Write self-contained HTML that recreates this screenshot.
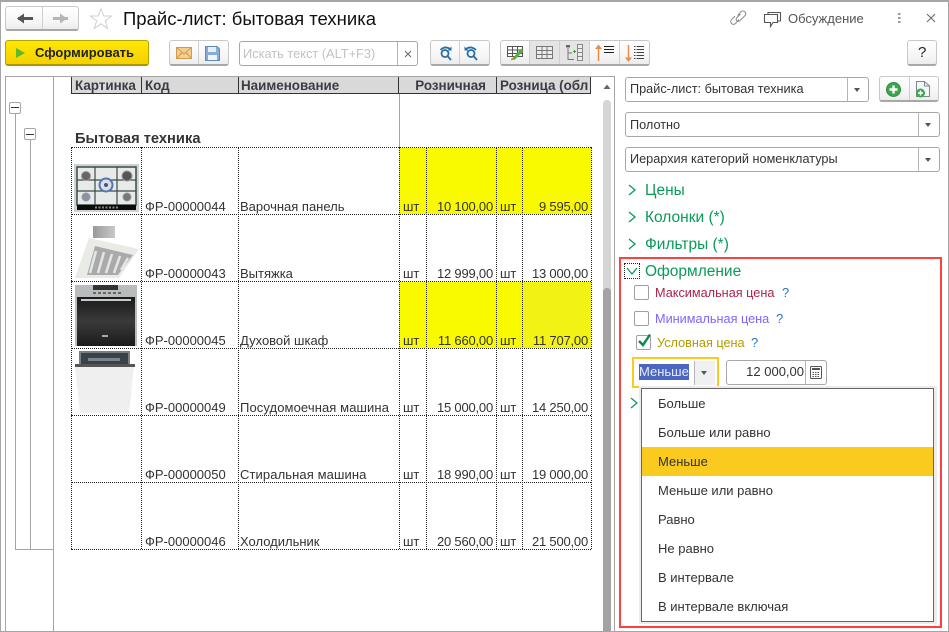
<!DOCTYPE html>
<html lang="ru"><head><meta charset="utf-8"><title>Прайс-лист</title>
<style>
html,body{margin:0;padding:0;background:#fff}
body{width:949px;height:632px;position:relative;overflow:hidden;font-family:"Liberation Sans",sans-serif;font-size:13px;color:#333}
.a{position:absolute}
.t{position:absolute;white-space:nowrap;line-height:16px}
.n{letter-spacing:-.2px}
.l{position:absolute;background:#a5a5a5}
.btn{position:absolute;box-sizing:border-box;background:linear-gradient(#fff,#f5f5f5 70%,#ececec);border:1px solid #c8c8c8;border-bottom:2px solid #a8a8a8;border-radius:3px}
.field{position:absolute;box-sizing:border-box;background:#fff;border:1px solid #a8a8a8;border-radius:3px}
.div{position:absolute;width:1px;background:#b5b5b5}
.arrow{position:absolute;width:0;height:0;border-left:3.5px solid transparent;border-right:3.5px solid transparent;border-top:4px solid #555}
.hd{position:absolute;top:77px;height:16px;background:#d9d9d9;font-weight:bold;color:#3b3b45;font-size:13.4px;line-height:17px;overflow:hidden;white-space:nowrap;box-sizing:border-box;padding-left:3px;border-right:1px solid #333}
.dh{position:absolute;height:0;border-top:1px dotted #222}
.dv{position:absolute;width:0;border-left:1px dotted #222}
.y{position:absolute;background:#f9f900}
.cb{position:absolute;box-sizing:border-box;width:15px;height:15px;background:#fff;border:1px solid #a0a0a0;border-radius:2px}
.sec{position:absolute;color:#0a9a5a;font-size:15.5px;line-height:18px;white-space:nowrap}
.item{position:absolute;left:658px;white-space:nowrap;line-height:16px;font-size:13px;color:#333}
</style></head><body>
<!-- outer frame -->
<div class="l" style="left:0;top:0;width:949px;height:2px"></div>
<div class="l" style="left:0;top:0;width:1px;height:632px"></div>
<div class="l" style="left:948px;top:0;width:1px;height:632px"></div>
<div class="l" style="left:0;top:631px;width:949px;height:1px"></div>

<!-- nav -->
<div class="btn" style="left:5px;top:6px;width:74px;height:25px"></div>
<div class="div" style="left:42px;top:7px;height:22px;background:#d0d0d0"></div>
<svg class="a" style="left:14px;top:10px" width="60" height="17"><path d="M4 8.500H19" stroke="#555" stroke-width="3"/><path d="M3 8.500L10 3.500V13.500Z" fill="#555"/><path d="M39 8.500H54" stroke="#b5b5b5" stroke-width="3"/><path d="M53 8.500L46 3.500V13.500Z" fill="#b5b5b5"/></svg>
<svg class="a" style="left:89px;top:7px" width="24" height="23"><path d="M12 1.500L14.800 9H22.500L16.300 13.700L18.600 21.500L12 16.800L5.400 21.500L7.700 13.700L1.500 9H9.200Z" fill="#fff" stroke="#ccd0d4"/></svg>
<div class="t" style="left:123px;top:8px;font-size:18.5px;line-height:22px;color:#111">Прайс-лист: бытовая техника</div>

<!-- top right -->
<svg class="a" style="left:729px;top:9px" width="19" height="18" fill="none" stroke="#8a8a8a" stroke-width="1"><path d="M8.500 6.500L12 2.800a2.700 2.700 0 0 1 4 3.800L10.500 12a2.200 2.200 0 0 1-3-3L11.500 5"/><path d="M10 10.500L6.500 14.500a2.700 2.700 0 0 1-4-3.800L6 7"/></svg>
<svg class="a" style="left:763px;top:11px" width="19" height="17" fill="none" stroke="#555" stroke-width="1.100"><path d="M5 3V1.500H17.500V10H15"/><path d="M1.500 3.500H14.500V11.500H10L7.500 15.500V11.500H1.500Z" fill="#fff"/></svg>
<div class="t" style="left:788px;top:11px;font-size:13px;color:#555">Обсуждение</div>
<svg class="a" style="left:896px;top:12px" width="8" height="12" fill="#9a9a9a"><rect x="2" y="1" width="2.500" height="2"/><rect x="2" y="5" width="2.500" height="2"/><rect x="2" y="9" width="2.500" height="2"/></svg>
<svg class="a" style="left:925px;top:12px" width="12" height="12" stroke="#666" stroke-width="1"><path d="M2 2L10 10M10 2L2 10"/></svg>

<!-- toolbar -->
<div class="a" style="left:5px;top:40px;width:144px;height:26px;box-sizing:border-box;border:1px solid #b9a100;border-bottom:2px solid #ad9700;border-radius:3px;background:linear-gradient(#ffe800,#f5d000)"></div>
<svg class="a" style="left:15px;top:47px" width="12" height="12"><path d="M1 1L10 6L1 11Z" fill="#5eb92c"/></svg>
<div class="t" style="left:35px;top:45px;font-weight:bold;color:#222;font-size:13px">Сформировать</div>

<div class="btn" style="left:169px;top:40px;width:60px;height:26px"></div>
<div class="div" style="left:198px;top:41px;height:23px;background:#cfcfcf"></div>
<svg class="a" style="left:176px;top:47px" width="16" height="12"><rect x=".5" y=".5" width="15" height="11" fill="#f5cd8e" stroke="#d19a4c"/><path d="M1 1L8 7L15 1M1 11L6 5.500M15 11L10 5.500" fill="none" stroke="#d19a4c"/></svg>
<svg class="a" style="left:205px;top:46px" width="15" height="15"><path d="M.5.500H12L14.500 3V14.500H.5Z" fill="#85add8" stroke="#5f8ab8"/><rect x="3" y="1" width="8" height="5" fill="#e8eef5"/><rect x="3" y="9" width="9" height="5" fill="#f0f3f7"/></svg>

<div class="field" style="left:239px;top:41px;width:179px;height:25px"></div>
<div class="div" style="left:397px;top:42px;height:23px;background:#b5b5b5"></div>
<div class="t" style="left:243px;top:46px;color:#c2c2c2;font-size:12.8px">Искать текст (ALT+F3)</div>
<svg class="a" style="left:404px;top:50px" width="8" height="8" stroke="#666" stroke-width="1"><path d="M1 1L7 7M7 1L1 7"/></svg>

<div class="btn" style="left:430px;top:40px;width:60px;height:26px"></div>
<div class="div" style="left:459px;top:41px;height:23px;background:#cfcfcf"></div>
<svg class="a" style="left:439px;top:45px" width="44" height="16" fill="none" stroke="#2a6ea6" stroke-width="1.800"><circle cx="6" cy="8.500" r="3.500"/><path d="M8.500 11L12 15"/><path d="M1.500 5Q6 .5 11 4"/><path d="M12.500 1.500V5.500H8.500" fill="#2a6ea6" stroke="none"/><circle cx="32" cy="8.500" r="3.500"/><path d="M34.500 11L38 15"/><path d="M37 5Q32 .5 27 4"/><path d="M25.500 1.500V5.500H29.500" fill="#2a6ea6" stroke="none"/></svg>

<div class="btn" style="left:500px;top:40px;width:150px;height:26px"></div>
<div class="a" style="left:530px;top:41px;width:59px;height:23px;background:#e4e4e4"></div>
<div class="div" style="left:529px;top:41px;height:23px;background:#cfcfcf"></div>
<div class="div" style="left:559px;top:41px;height:23px;background:#cfcfcf"></div>
<div class="div" style="left:589px;top:41px;height:23px;background:#cfcfcf"></div>
<div class="div" style="left:619px;top:41px;height:23px;background:#cfcfcf"></div>
<svg class="a" style="left:507px;top:45px" width="17" height="16"><path d="M.5 1.500H15.500V11.500H.5ZM.5 5H15.500M.5 8.500H15.500M5.500 1.500V11.500M10.500 1.500V11.500" fill="#fff" stroke="#555"/><path d="M5 14L14 3.500L16.500 6L7.500 15Z" fill="#5cae3c"/><path d="M3.500 15.500L5 12.500L7.500 14.500Z" fill="#c98b3a"/></svg>
<svg class="a" style="left:536px;top:46px" width="17" height="13"><path d="M.5.500H16.500V12.500H.5ZM.5 4.500H16.500M.5 8.500H16.500M6 .5V12.500M11 .5V12.500" fill="#ededed" stroke="#777"/></svg>
<svg class="a" style="left:565px;top:44px" width="18" height="18"><rect x="1" y="1" width="4" height="2.500" fill="#666"/><path d="M3 4V15.500H9M3 9H7" fill="none" stroke="#777"/><path d="M8 7.500H11M9.500 6V9" stroke="#3e9b3e"/><rect x="12.500" y=".5" width="5" height="16" fill="#eee" stroke="#888"/><path d="M12.500 4.500H17.500M12.500 8.500H17.500M12.500 12.500H17.500" stroke="#888"/></svg>
<svg class="a" style="left:595px;top:44px" width="19" height="18"><path d="M3.500 17V4" stroke="#ee8a4c" stroke-width="1.500"/><path d="M3.500 .5L7 5H0Z" fill="#ee8a4c"/><path d="M9 2.500H19M9 5.500H19M9 8.500H19" stroke="#222"/></svg>
<svg class="a" style="left:625px;top:44px" width="19" height="18"><path d="M3.500 1V14" stroke="#ee8a4c" stroke-width="1.500"/><path d="M3.500 18L7 13.500H0Z" fill="#ee8a4c"/><path d="M9 2.500H19M9 5.500H19M9 8.500H19M9 11.500H19M9 14.500H19" stroke="#444" stroke-dasharray="1.500 1 7.500 0"/></svg>

<div class="btn" style="left:907px;top:40px;width:30px;height:26px"></div>
<div class="t" style="left:918px;top:45px;font-size:15px;color:#222">?</div>

<!-- left panel frame -->
<div class="l" style="left:5px;top:76px;width:610px;height:1px"></div>
<div class="l" style="left:5px;top:76px;width:1px;height:556px"></div>
<div class="l" style="left:53px;top:76px;width:1px;height:556px"></div>
<div class="l" style="left:614px;top:76px;width:1px;height:556px"></div>
<div class="l" style="left:15px;top:113px;width:1px;height:437px"></div>
<div class="l" style="left:30px;top:140px;width:1px;height:410px"></div>
<div class="l" style="left:15px;top:549px;width:39px;height:1px"></div>
<div class="a" style="left:9px;top:102px;width:12px;height:12px;box-sizing:border-box;border:1px solid #a5a5a5;border-radius:2px;background:#fff"><div class="a" style="left:1px;top:4px;width:8px;height:1px;background:#333"></div></div>
<div class="a" style="left:24px;top:128px;width:12px;height:12px;box-sizing:border-box;border:1px solid #a5a5a5;border-radius:2px;background:#fff"><div class="a" style="left:1px;top:5px;width:8px;height:1px;background:#333"></div></div>

<!-- header -->
<div class="hd" style="left:71px;width:71px;border-left:1px solid #333">Картинка</div>
<div class="hd" style="left:142px;width:97px">Код</div>
<div class="hd" style="left:239px;width:160px;padding-left:2px">Наименование</div>
<div class="hd" style="left:399px;width:98px;text-align:right;padding-right:10px">Розничная</div>
<div class="hd" style="left:497px;width:94px">Розница (обл</div>
<div class="a" style="left:71px;top:93px;width:520px;height:1px;background:#333"></div>
<div class="l" style="left:399px;top:94px;width:1px;height:54px"></div>

<div class="t" style="left:75px;top:131px;font-weight:bold;font-size:14.7px;color:#333">Бытовая техника</div>

<!-- yellow -->
<div class="y" style="left:399px;top:148px;width:192px;height:66px"></div>
<div class="y" style="left:399px;top:282px;width:192px;height:66px"></div>
<div class="a" style="left:522px;top:283px;width:69px;height:65px;background:#f2f215"></div>

<!-- grid -->
<div class="dh" style="left:71px;top:147px;width:520px"></div>
<div class="dh" style="left:71px;top:214px;width:520px"></div>
<div class="dh" style="left:71px;top:281px;width:520px"></div>
<div class="dh" style="left:71px;top:348px;width:520px"></div>
<div class="dh" style="left:71px;top:415px;width:520px"></div>
<div class="dh" style="left:71px;top:482px;width:520px"></div>
<div class="dh" style="left:71px;top:549px;width:520px"></div>
<div class="dv" style="left:71px;top:147px;height:402px"></div>
<div class="dv" style="left:141px;top:147px;height:402px"></div>
<div class="dv" style="left:238px;top:147px;height:402px"></div>
<div class="dv" style="left:399px;top:147px;height:402px"></div>
<div class="dv" style="left:426px;top:147px;height:402px"></div>
<div class="dv" style="left:496px;top:147px;height:402px"></div>
<div class="dv" style="left:522px;top:147px;height:402px"></div>
<div class="dv" style="left:591px;top:147px;height:402px"></div>

<!-- images -->
<svg class="a" style="left:74px;top:164px" width="65" height="48"><rect width="65" height="48" fill="#cfd2d2"/><rect x="3" y="3" width="59" height="38" fill="#e8eaea" stroke="#3b4a48" stroke-width="1.500"/><path d="M3 16H62M3 27H62M21 3V41M43 3V41" stroke="#3b4a48" stroke-width="1.200"/><circle cx="12" cy="12" r="4.500" fill="#666" stroke="#999"/><circle cx="53" cy="12" r="5" fill="#555" stroke="#999"/><circle cx="12" cy="33" r="4" fill="#8793a6" stroke="#999"/><circle cx="53" cy="33" r="4" fill="#777" stroke="#999"/><circle cx="32" cy="21" r="6.500" fill="#dde" stroke="#4e78b0" stroke-width="2"/><circle cx="32" cy="21" r="2" fill="#556"/><rect x="3" y="41" width="59" height="5" fill="#0b0b0b"/><path d="M21 43.500H44" stroke="#888" stroke-width="2" stroke-dasharray="2 1.500"/></svg>
<svg class="a" style="left:74px;top:226px" width="66" height="53"><defs><linearGradient id="g1" x1="0" x2="1"><stop offset="0" stop-color="#999"/><stop offset="1" stop-color="#c8c8c8"/></linearGradient></defs><rect x="19" width="22" height="12" fill="url(#g1)"/><path d="M15 12L65 23L45 52H1Z" fill="#e9ebe6"/><path d="M21 20L59 29L44 49H13Z" fill="#aaa"/><path d="M22 25L16 47M30 26L24 47M38 28L32 47M46 30L40 47M54 32L47 44" stroke="#e5e5e5" stroke-width="2.500"/></svg>
<svg class="a" style="left:75px;top:285px" width="62" height="61"><defs><linearGradient id="g2" x1="0" y1="0" x2="0" y2="1"><stop offset="0" stop-color="#1a1a1a"/><stop offset=".5" stop-color="#3a3a3a"/><stop offset="1" stop-color="#1b1b1b"/></linearGradient></defs><rect width="62" height="61" fill="#b9bcbd"/><rect x="18" y="0" width="25" height="5" fill="#333"/><path d="M18 8H48" stroke="#666" stroke-dasharray="3 2" stroke-width="2"/><rect x="2" y="12" width="58" height="49" fill="url(#g2)"/><rect x="6" y="14" width="50" height="2" fill="#c9c9c9"/><rect x="27" y="50" width="6" height="2" fill="#aaa"/></svg>
<svg class="a" style="left:74px;top:351px" width="62" height="62"><rect x="5" width="51" height="13" fill="#7a7f84"/><rect x="7" y="2" width="47" height="11" fill="#39424a"/><rect x="14" y="7" width="32" height="3" fill="#7e8488"/><rect x="1" y="13" width="60" height="3" fill="#555"/><path d="M1 16H60L55 62H6Z" fill="#efefef"/></svg>

<!-- rows -->
<div class="t" style="left:145px;top:199px">ФР-00000044</div><div class="t" style="left:240px;top:199px">Варочная панель</div><div class="t" style="left:403px;top:199px">шт</div><div class="t n" style="left:427px;top:199px;width:66px;text-align:right">10 100,00</div><div class="t" style="left:500px;top:199px">шт</div><div class="t n" style="left:523px;top:199px;width:65px;text-align:right">9 595,00</div>
<div class="t" style="left:145px;top:266px">ФР-00000043</div><div class="t" style="left:240px;top:266px">Вытяжка</div><div class="t" style="left:403px;top:266px">шт</div><div class="t n" style="left:427px;top:266px;width:66px;text-align:right">12 999,00</div><div class="t" style="left:500px;top:266px">шт</div><div class="t n" style="left:523px;top:266px;width:65px;text-align:right">13 000,00</div>
<div class="t" style="left:145px;top:333px">ФР-00000045</div><div class="t" style="left:240px;top:333px">Духовой шкаф</div><div class="t" style="left:403px;top:333px">шт</div><div class="t n" style="left:427px;top:333px;width:66px;text-align:right">11 660,00</div><div class="t" style="left:500px;top:333px">шт</div><div class="t n" style="left:523px;top:333px;width:65px;text-align:right">11 707,00</div>
<div class="t" style="left:145px;top:400px">ФР-00000049</div><div class="t" style="left:240px;top:400px;letter-spacing:.1px">Посудомоечная машина</div><div class="t" style="left:403px;top:400px">шт</div><div class="t n" style="left:427px;top:400px;width:66px;text-align:right">15 000,00</div><div class="t" style="left:500px;top:400px">шт</div><div class="t n" style="left:523px;top:400px;width:65px;text-align:right">14 250,00</div>
<div class="t" style="left:145px;top:467px">ФР-00000050</div><div class="t" style="left:240px;top:467px;letter-spacing:.1px">Стиральная машина</div><div class="t" style="left:403px;top:467px">шт</div><div class="t n" style="left:427px;top:467px;width:66px;text-align:right">18 990,00</div><div class="t" style="left:500px;top:467px">шт</div><div class="t n" style="left:523px;top:467px;width:65px;text-align:right">19 000,00</div>
<div class="t" style="left:145px;top:534px">ФР-00000046</div><div class="t" style="left:240px;top:534px">Холодильник</div><div class="t" style="left:403px;top:534px">шт</div><div class="t n" style="left:427px;top:534px;width:66px;text-align:right">20 560,00</div><div class="t" style="left:500px;top:534px">шт</div><div class="t n" style="left:523px;top:534px;width:65px;text-align:right">21 500,00</div>

<!-- scrollbar -->
<svg class="a" style="left:603px;top:84px" width="8" height="6"><path d="M4 0.500L7.500 5H.5Z" fill="#666"/></svg>
<div class="a" style="left:603px;top:100px;width:8px;height:200px;background:#d5d5d5;border-radius:4px 4px 0 0"></div>
<div class="a" style="left:603px;top:288px;width:8px;height:343px;background:#a3a3a3;border-radius:4px 4px 0 0"></div>

<!-- right panel -->
<div class="field" style="left:625px;top:77px;width:244px;height:25px"></div>
<div class="div" style="left:847px;top:78px;height:23px"></div>
<div class="arrow" style="left:854px;top:88px"></div>
<div class="t" style="left:630px;top:81px;font-size:12.7px">Прайс-лист: бытовая техника</div>
<div class="btn" style="left:879px;top:76px;width:60px;height:26px"></div>
<div class="div" style="left:909px;top:77px;height:23px;background:#cfcfcf"></div>
<svg class="a" style="left:886px;top:82px" width="15" height="15"><circle cx="7.500" cy="7.500" r="7" fill="#3aa84c" stroke="#2c8c3e"/><path d="M7.500 3.500V11.500M3.500 7.500H11.500" stroke="#fff" stroke-width="2.400"/></svg>
<svg class="a" style="left:915px;top:81px" width="16" height="17"><path d="M1.500.5H9.500L14.500 5V15.500H1.500Z" fill="#f4f6f8" stroke="#7c8894"/><path d="M9.500.5V5H14.500" fill="none" stroke="#7c8894"/><circle cx="5.500" cy="12" r="4.500" fill="#3aa84c"/><path d="M5.500 9.500V14.500M3 12H8" stroke="#fff" stroke-width="1.500"/></svg>

<div class="field" style="left:625px;top:112px;width:315px;height:25px"></div>
<div class="div" style="left:918px;top:113px;height:23px"></div>
<div class="arrow" style="left:925px;top:123px"></div>
<div class="t" style="left:630px;top:117px;font-size:12.7px">Полотно</div>
<div class="field" style="left:625px;top:147px;width:315px;height:25px"></div>
<div class="div" style="left:918px;top:148px;height:23px"></div>
<div class="arrow" style="left:925px;top:158px"></div>
<div class="t" style="left:630px;top:151px;font-size:12.7px">Иерархия категорий номенклатуры</div>

<svg class="a" style="left:627px;top:183px" width="10" height="14" fill="none" stroke="#0a9a5a" stroke-width="1.300"><path d="M2 2L8 7L2 12"/></svg>
<div class="sec" style="left:645px;top:182px">Цены</div>
<svg class="a" style="left:627px;top:210px" width="10" height="14" fill="none" stroke="#0a9a5a" stroke-width="1.300"><path d="M2 2L8 7L2 12"/></svg>
<div class="sec" style="left:645px;top:209px">Колонки (*)</div>
<svg class="a" style="left:627px;top:237px" width="10" height="14" fill="none" stroke="#0a9a5a" stroke-width="1.300"><path d="M2 2L8 7L2 12"/></svg>
<div class="sec" style="left:645px;top:236px">Фильтры (*)</div>

<div class="a" style="left:619px;top:257px;width:323px;height:371px;box-sizing:border-box;border:2px solid #ff4040"></div>
<div class="a" style="left:624px;top:263px;width:16px;height:16px;box-sizing:border-box;border:1px dotted #222"></div>
<svg class="a" style="left:625px;top:266px" width="14" height="10" fill="none" stroke="#0a9a5a" stroke-width="1.300"><path d="M2 2L7 8L12 2"/></svg>
<div class="sec" style="left:645px;top:263px">Оформление</div>

<div class="cb" style="left:634px;top:285px"></div>
<div class="t" style="left:655px;top:285px;color:#a8254a;font-size:12.7px">Максимальная цена</div>
<div class="t" style="left:782px;top:285px;color:#2a78c8;font-size:13px">?</div>
<div class="cb" style="left:634px;top:311px"></div>
<div class="t" style="left:655px;top:311px;color:#7a66ff;font-size:12.7px">Минимальная цена</div>
<div class="t" style="left:776px;top:311px;color:#2a78c8;font-size:13px">?</div>
<div class="cb" style="left:636px;top:335px"></div>
<svg class="a" style="left:637px;top:333px" width="16" height="15" fill="none" stroke="#0a8a4a" stroke-width="2.400"><path d="M2 8L6 12L13 1.500"/></svg>
<div class="t" style="left:657px;top:335px;color:#b29a00;font-size:12.7px">Условная цена</div>
<div class="t" style="left:751px;top:335px;color:#2a78c8;font-size:13px">?</div>

<div class="a" style="left:632px;top:357px;width:87px;height:31px;box-sizing:border-box;border:2px solid #fbca1f;background:#fff"></div>
<div class="a" style="left:694px;top:361px;width:21px;height:24px;background:#f0f0f0"></div>
<div class="div" style="left:694px;top:361px;height:24px"></div>
<div class="arrow" style="left:701px;top:371px"></div>
<div class="a" style="left:639px;top:364px;width:50px;height:16px;background:#4a66c0"></div>
<div class="t" style="left:639px;top:364px;font-size:13px;color:#e8ecf8">Меньше</div>

<div class="field" style="left:726px;top:360px;width:101px;height:25px"></div>
<div class="div" style="left:805px;top:361px;height:23px"></div>
<div class="t" style="left:727px;top:364px;width:77px;text-align:right;font-size:13px">12 000,00</div>
<svg class="a" style="left:810px;top:366px" width="12" height="13"><rect x=".5" y=".5" width="11" height="12" rx="1" fill="#fff" stroke="#555"/><rect x="2" y="2" width="8" height="2" fill="#555"/><path d="M2.500 6.500H9.500M2.500 8.500H9.500M2.500 10.500H9.500" stroke="#555" stroke-dasharray="1.500 1"/></svg>

<svg class="a" style="left:629px;top:396px" width="10" height="14" fill="none" stroke="#0a9a5a" stroke-width="1.300"><path d="M2 2L8 7L2 12"/></svg>

<!-- dropdown -->
<div class="a" style="left:639px;top:386px;width:298px;height:238px;background:#ececec"></div>
<div class="a" style="left:641px;top:388px;width:293px;height:234px;box-sizing:border-box;border:1px solid #666;background:#fff"></div>
<div class="a" style="left:642px;top:447px;width:291px;height:29px;background:#fbca1f"></div>
<div class="item" style="top:396px">Больше</div>
<div class="item" style="top:425px">Больше или равно</div>
<div class="item" style="top:454px">Меньше</div>
<div class="item" style="top:483px">Меньше или равно</div>
<div class="item" style="top:512px">Равно</div>
<div class="item" style="top:541px">Не равно</div>
<div class="item" style="top:570px">В интервале</div>
<div class="item" style="top:599px">В интервале включая</div>
</body></html>
